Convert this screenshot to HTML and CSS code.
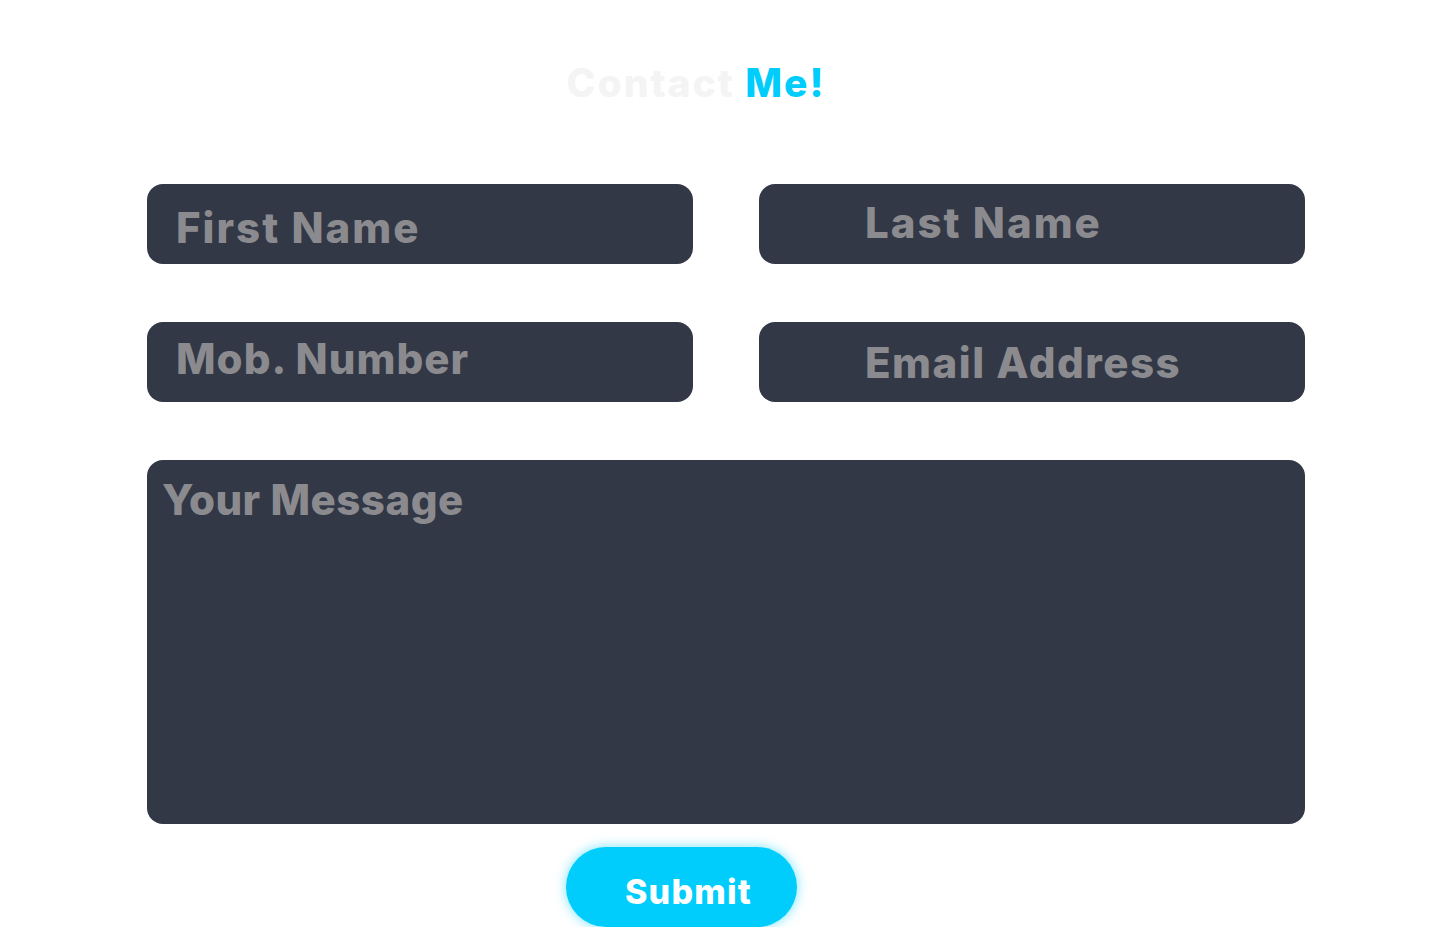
FILE: index.html
```html
<!DOCTYPE html>
<html lang="en">
<head>
<meta charset="utf-8">
<title>Contact Me</title>
<link rel="stylesheet" href="styles.css">
</head>
<body>
<section class="contact">
  <h1 class="title"><span class="title-main">Contact</span> <span class="title-accent">Me!</span></h1>
  <form class="form">
    <div class="row">
      <input class="field field-first" type="text" placeholder="First Name">
      <input class="field field-last" type="text" placeholder="Last Name">
    </div>
    <div class="row">
      <input class="field field-mob" type="text" placeholder="Mob. Number">
      <input class="field field-email" type="email" placeholder="Email Address">
    </div>
    <textarea class="message" placeholder="Your Message"></textarea>
    <div class="actions">
      <button class="submit" type="button">Submit</button>
    </div>
  </form>
</section>
</body>
</html>
```

FILE: styles.css
```css
html, body {
  margin: 0;
  padding: 0;
  background: #ffffff;
}

body {
  font-family: "Inter", "Noto Sans", sans-serif;
}

.contact {
  width: 1158px;
  margin-left: 147px;
  padding-top: 58px;
}

.title {
  margin: 0;
  text-align: center;
  font-size: 39px;
  font-weight: 800;
  line-height: 50px;
  letter-spacing: 2px;
  padding-right: 60px;
}

.title-main { color: #f4f4f5; }
.title-accent { color: #00cdfc; }

.form {
  margin-top: 76px;
  display: flex;
  flex-direction: column;
}

.row {
  display: grid;
  grid-template-columns: 546px 546px;
  column-gap: 66px;
  margin-bottom: 58px;
}

.field,
.message {
  box-sizing: border-box;
  border: none;
  outline: none;
  background: #323846;
  border-radius: 16px;
  color: #8b8b8f;
  font-family: inherit;
  font-weight: 800;
  font-size: 42px;
  letter-spacing: 1px;
  margin: 0;
}

.field {
  height: 80px;
}

.field::placeholder,
.message::placeholder {
  color: #8b8b8f;
  opacity: 1;
}

.field-first { padding: 6px 0 0 29px; letter-spacing: 2px; }
.field-last { padding: 0 0 3px 106px; letter-spacing: 2px; }
.field-mob { padding: 0 0 8px 29px; }
.field-email { padding: 0 0 0 106px; letter-spacing: 1.5px; }

.message {
  width: 1158px;
  height: 364px;
  resize: none;
  padding: 15px 15px;
  line-height: 50px;
  display: block;
  letter-spacing: 0.5px;
}

.actions {
  margin-top: 23px;
  padding-left: 419px;
}

.submit {
  width: 231px;
  height: 80px;
  border: none;
  border-radius: 40px;
  background: #00cdfc;
  color: #ffffff;
  font-family: inherit;
  font-weight: 800;
  font-size: 34px;
  letter-spacing: 1.2px;
  padding: 8px 0 0 14px;
  box-shadow: 0 0 12px rgba(0, 205, 252, 0.55);
  cursor: pointer;
}
```
